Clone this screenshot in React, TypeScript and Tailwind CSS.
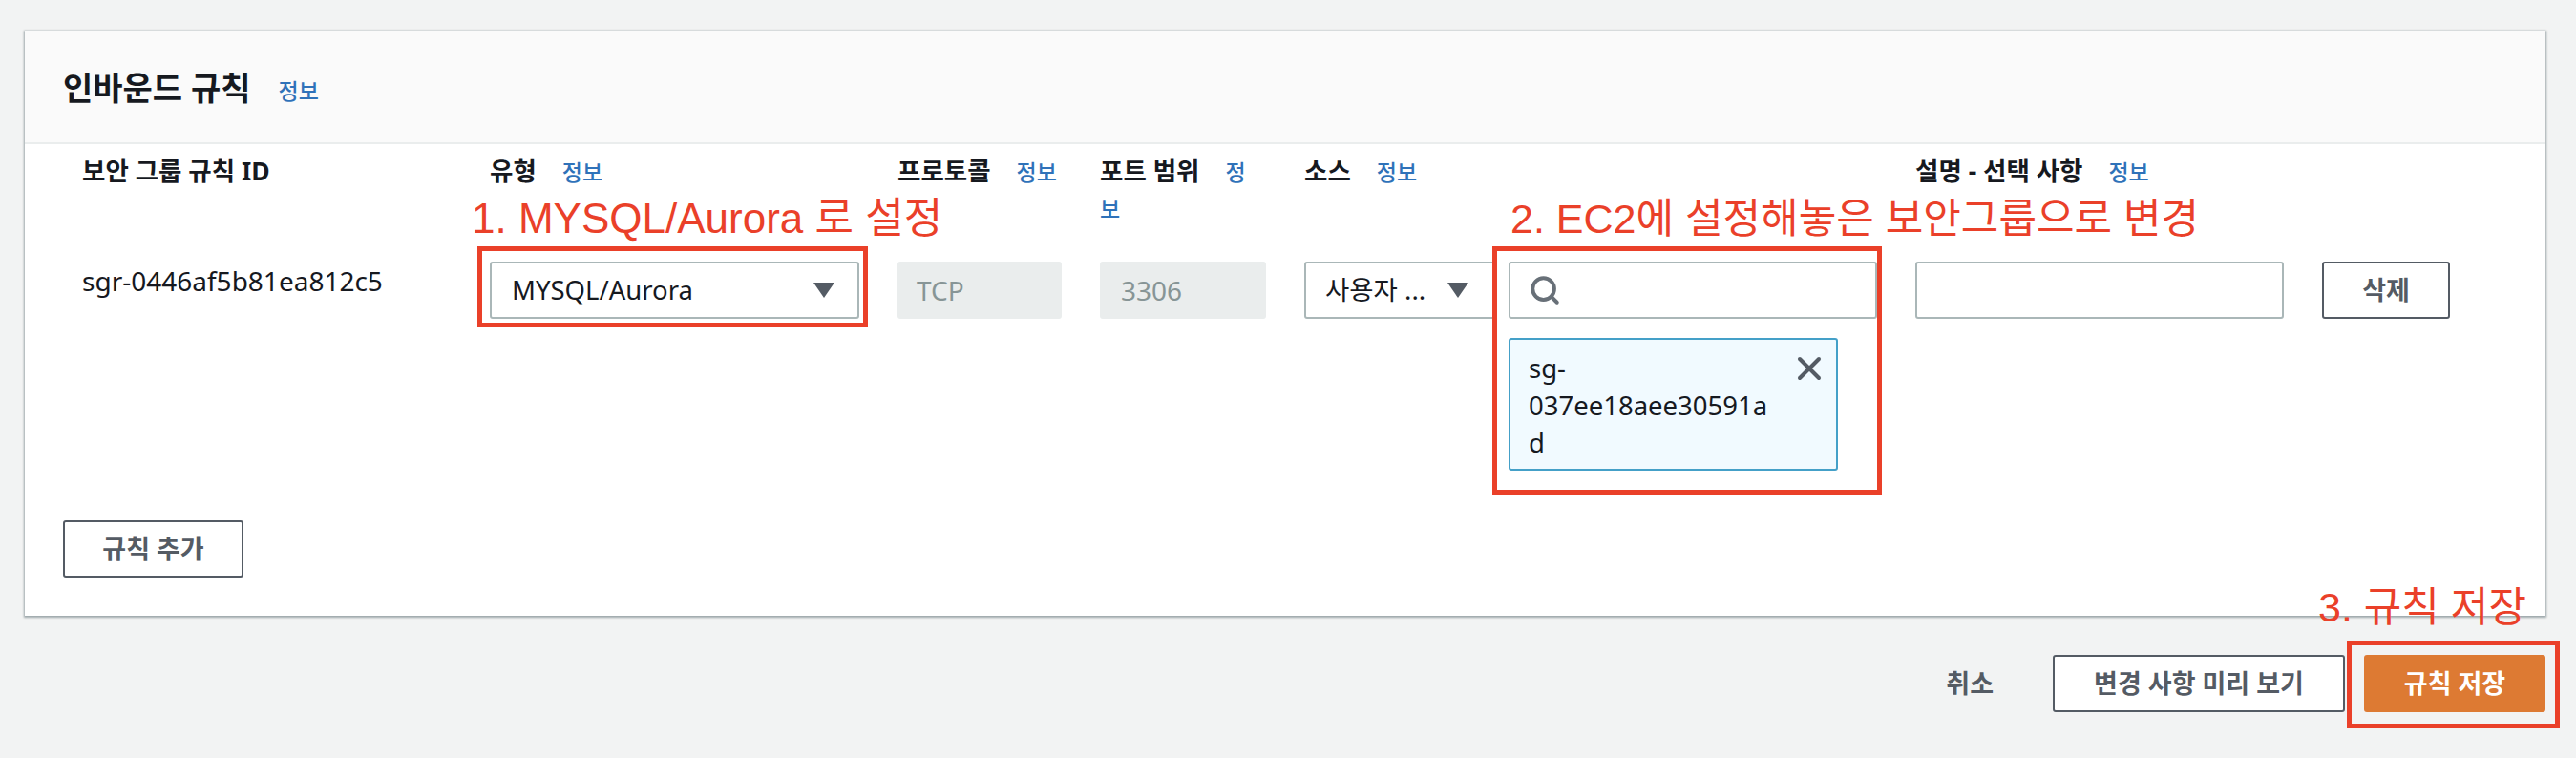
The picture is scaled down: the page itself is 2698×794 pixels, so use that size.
import { Search, X } from 'lucide-react';

const FONT = "font-['Noto_Sans','Noto_Sans_CJK_KR',sans-serif]";

function Info() {
  return <a className="text-[23px] leading-[38px] text-[#2f72b9] font-medium">정보</a>;
}

function Label({ text, gap = 'ml-[27px]' }: { text: string; gap?: string }) {
  return (
    <div className="pt-[9px] text-[26.5px] leading-[38px] font-bold text-[#16191f]">
      {text}
      <span className={gap}>
        <Info />
      </span>
    </div>
  );
}

function Caret() {
  return (
    <svg viewBox="0 0 22 16" className="w-[22px] h-[16px] shrink-0 fill-[#545b64]">
      <path d="M0 0h22L11 16z" />
    </svg>
  );
}

function Select({ value, className }: { value: string; className: string }) {
  return (
    <div className={`h-[60px] flex items-center justify-between bg-white border-2 border-[#aab7b8] rounded-[3px] text-[27.5px] text-[#16191f] ${className}`}>
      <span className="truncate">{value}</span>
      <Caret />
    </div>
  );
}

function Note({ text, className }: { text: string; className: string }) {
  return (
    <div className={`absolute font-['Liberation_Sans','Noto_Sans_CJK_KR',sans-serif] leading-[48px] whitespace-nowrap text-[#ea4029] ${className}`}>
      {text}
    </div>
  );
}

function Outline({ className }: { className: string }) {
  return <div className={`absolute border-[5px] border-[#ea4029] ${className}`} />;
}

export default function App() {
  return (
    <div className={`relative w-[2698px] h-[794px] overflow-hidden bg-[#f2f3f3] pt-[32px] pl-[26px] pr-[32px] ${FONT}`}>
      <section className="h-[613px] bg-white shadow-[0_1px_2px_1px_rgba(0,28,36,0.35)]">
        <header className="h-[119px] bg-[#fafafa] border-b-2 border-[#eaeded] pl-[40px] pt-[37px] flex items-start gap-[29px]">
          <h2 className="text-[34px] leading-[46px] font-bold text-[#16191f]">인바운드 규칙</h2>
          <span className="pt-[7px]"><Info /></span>
        </header>

        <div className="pl-[60px] grid grid-cols-[387px_387px_172px_174px_600px_386px_134px] grid-rows-[123px_271px] gap-x-[40px]">
          <div className="pt-[9px] text-[26.5px] leading-[38px] font-bold text-[#16191f]">보안 그룹 규칙 ID</div>
          <Label text="유형" />
          <Label text="프로토콜" />
          <div className="w-[160px]">
            <Label text="포트 범위" gap="ml-[27px]" />
          </div>
          <Label text="소스" />
          <Label text="설명 - 선택 사항" />
          <div />

          <div className="pt-[7px] text-[28px] leading-[26px] text-[#16191f]">sgr-0446af5b81ea812c5</div>
          <Select value="MYSQL/Aurora" className="pl-[21px] pr-[24px]" />
          <div className="h-[60px] flex items-center pl-[20px] bg-[#eaeded] rounded-[3px] text-[28px] text-[#879596]">TCP</div>
          <div className="h-[60px] flex items-center pl-[22px] bg-[#eaeded] rounded-[3px] text-[28px] text-[#879596]">3306</div>

          <div className="flex gap-[14px]">
            <Select value="사용자 ..." className="w-[200px] pl-[20px] pr-[26px]" />
            <div className="w-[386px]">
              <div className="h-[60px] flex items-center pl-[19px] border-2 border-[#aab7b8] rounded-[3px]">
                <Search className="w-[34px] h-[34px] text-[#687078]" strokeWidth={2.8} />
              </div>
              <div className="mt-[20px] w-[345px] h-[139px] flex justify-between bg-[#f1faff] border-2 border-[#44a0c8] rounded-[3px] pl-[19px] pr-[8px] pt-[10px] text-[27.5px] leading-[39px] text-[#16191f]">
                <span className="w-[262px] break-all">sg-<br />037ee18aee30591ad</span>
                <X className="w-[40px] h-[40px] text-[#545b64]" strokeWidth={2.4} />
              </div>
            </div>
          </div>

          <div className="h-[60px] border-2 border-[#aab7b8] rounded-[3px]" />
          <button className="h-[60px] bg-white border-2 border-[#545b64] rounded-[3px] text-[27px] font-bold text-[#545b64]">삭제</button>
        </div>

        <button className="ml-[40px] w-[189px] h-[60px] bg-white border-2 border-[#545b64] rounded-[3px] text-[27px] font-bold text-[#545b64]">규칙 추가</button>
      </section>

      <footer className="mt-[41px] flex items-center justify-end">
        <span className="mr-[62px] text-[27px] font-bold text-[#545b64]">취소</span>
        <button className="w-[306px] h-[60px] mr-[20px] bg-white border-2 border-[#545b64] rounded-[3px] text-[27px] font-bold text-[#545b64]">변경 사항 미리 보기</button>
        <button className="w-[190px] h-[60px] bg-[#dd7a33] rounded-[3px] text-[27px] font-bold text-white">규칙 저장</button>
      </footer>

      <Note text="1. MYSQL/Aurora 로 설정" className="text-[44px] left-[494px] top-[205px]" />
      <Note text="2. EC2에 설정해놓은 보안그룹으로 변경" className="text-[43px] left-[1582px] top-[205px]" />
      <Note text="3. 규칙 저장" className="text-[43px] left-[2428px] top-[612px]" />
      <Outline className="left-[500px] top-[258px] w-[409px] h-[85px]" />
      <Outline className="left-[1563px] top-[258px] w-[408px] h-[260px]" />
      <Outline className="left-[2458px] top-[671px] w-[223px] h-[92px]" />
    </div>
  );
}
